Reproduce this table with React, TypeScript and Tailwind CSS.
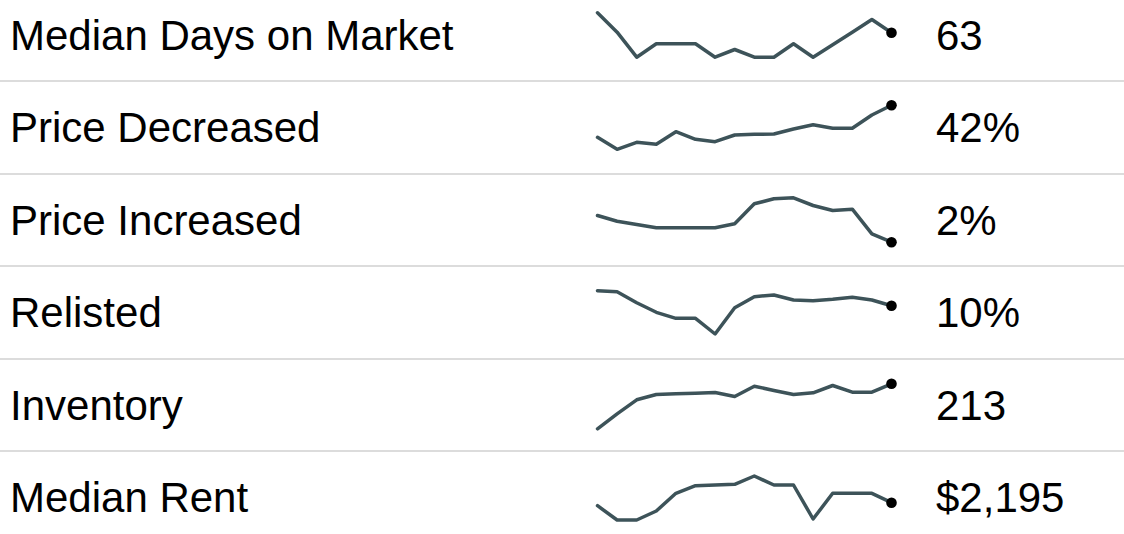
import React from "react";

interface Metric {
  label: string;
  value: string;
  // sparkline y positions, in px from the top of the row
  points: number[];
}

const metrics: Metric[] = [
  {
    label: "Median Days on Market",
    value: "63",
    points: [22.8, 42.2, 67.2, 53.8, 53.8, 53.8, 67.2, 59.5, 67.2, 67.2, 53.8, 67.2, 54.8, 42.2, 29.5, 42.8],
  },
  {
    label: "Price Decreased",
    value: "42%",
    points: [55.3, 67.3, 60.3, 62.3, 49.7, 57.3, 59.7, 53, 52.3, 52, 47, 42.7, 46.3, 46.3, 33, 23.3],
  },
  {
    label: "Price Increased",
    value: "2%",
    points: [40.5, 46.2, 49.5, 52.8, 52.8, 52.8, 52.8, 48.8, 28.8, 23.8, 22.8, 30.5, 35.5, 34.2, 58.8, 67.2],
  },
  {
    label: "Relisted",
    value: "10%",
    points: [23.7, 24.7, 35.7, 45.3, 51.3, 51.3, 67, 40.7, 29.7, 28, 33, 33.7, 32.3, 30.3, 33, 38.7],
  },
  {
    label: "Inventory",
    value: "213",
    points: [68.8, 53.8, 39.8, 34.5, 33.8, 33.2, 32.5, 36.5, 26.2, 30.5, 34.5, 32.8, 25.5, 32.2, 32.2, 23.8],
  },
  {
    label: "Median Rent",
    value: "$2,195",
    points: [53.7, 68, 68, 59, 41.3, 33.7, 33, 32.3, 24, 33, 33, 67, 41.3, 41.3, 41.3, 50.7],
  },
];

function Sparkline({ points }: { points: number[] }) {
  const xs = points.map((_, i) => 17.5 + i * 19.6);
  const d = points.map((y, i) => `${i === 0 ? "M" : "L"}${xs[i]} ${y}`).join(" ");
  const last = points.length - 1;
  return (
    <svg width="320" height="90" viewBox="0 0 320 90" className="shrink-0">
      <path d={d} fill="none" stroke="#3d5359" strokeWidth="3.5" strokeLinejoin="round" strokeLinecap="round" />
      <circle cx={xs[last]} cy={points[last]} r="5.3" fill="#000" />
    </svg>
  );
}

export default function App() {
  return (
    <div className="w-[1124px] h-[534px] overflow-hidden bg-white text-black font-['Liberation_Sans',Arial,sans-serif]">
      <div className="-mt-[10.5px]">
        {metrics.map((m) => (
          <div key={m.label} className="flex items-center h-[92.5px] border-b-2 border-[#dcdcdc]">
            <div className="w-[580px] pl-[10px] pt-[2px] text-[42px] leading-none">{m.label}</div>
            <Sparkline points={m.points} />
            <div className="pl-[36px] pt-[2px] text-[42px] leading-none">{m.value}</div>
          </div>
        ))}
      </div>
    </div>
  );
}
